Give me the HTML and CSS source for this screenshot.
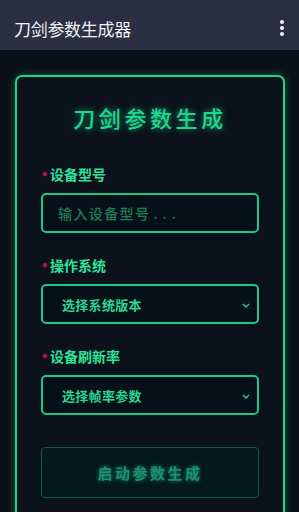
FILE: index.html
```html
<!DOCTYPE html>
<html lang="zh">
<head>
<meta charset="utf-8">
<link rel="stylesheet" href="styles.css">
</head>
<body>
<header class="appbar">
  <span class="appbar-title">刀剑参数生成器</span>
  <span class="menu"><i></i><i></i><i></i></span>
</header>
<main class="page">
  <section class="card">
    <h1 class="card-title">刀剑参数生成</h1>
    <div class="field">
      <label class="label"><span class="dot"></span>设备型号</label>
      <div class="control input"><span class="placeholder">输入设备型号<span class="dots">...</span></span></div>
    </div>
    <div class="field">
      <label class="label"><span class="dot"></span>操作系统</label>
      <div class="control select"><span>选择系统版本</span>
        <svg class="chev" width="8" height="5" viewBox="0 0 8 5"><path d="M1 1 L4 4 L7 1" fill="none" stroke="#2bd596" stroke-width="1.3"/></svg>
      </div>
    </div>
    <div class="field">
      <label class="label"><span class="dot"></span>设备刷新率</label>
      <div class="control select"><span>选择帧率参数</span>
        <svg class="chev" width="8" height="5" viewBox="0 0 8 5"><path d="M1 1 L4 4 L7 1" fill="none" stroke="#2bd596" stroke-width="1.3"/></svg>
      </div>
    </div>
    <div class="button"><span>启动参数生成</span></div>
  </section>
</main>
</body>
</html>
```
FILE: styles.css
```css
* { box-sizing: border-box; }
html, body { margin: 0; padding: 0; height: 100%; overflow: hidden; }
body {
  background: #0a0f18;
  font-family: "Noto Sans CJK SC", "Noto Sans", sans-serif;
  color: #fff;
}
.appbar {
  height: 50px;
  background: #2c2e43;
  display: flex;
  align-items: center;
  justify-content: space-between;
  padding: 6px 12px 0 14px;
}
.appbar-title {
  font-size: 17px;
  color: #f2f2f5;
  letter-spacing: -0.3px;
}
.menu {
  display: flex;
  flex-direction: column;
  gap: 2px;
  padding-right: 3px;
}
.menu i {
  width: 4px; height: 4px; border-radius: 50%;
  background: #f2f2f5;
  display: block;
}
.page {
  padding: 25px 14px 0 15px;
}
.card {
  border: 2px solid #18d68a;
  border-radius: 7px;
  box-shadow: 0 0 10px rgba(24, 214, 138, 0.35);
  background: #0b121b;
  padding: 26px 24px 40px;
  height: 520px;
}
.card-title {
  margin: 0 0 33px;
  text-align: center;
  font-size: 22px;
  font-weight: 500;
  letter-spacing: 3.6px;
  color: #1fd690;
  line-height: 28px;
  text-shadow: 0 0 6px rgba(31, 214, 144, 0.7);
}
.field { margin-bottom: 22px; }
.label {
  display: flex;
  align-items: center;
  font-size: 14px;
  font-weight: 700;
  color: #2ee29a;
  line-height: 20px;
  margin-bottom: 9px;
  padding-left: 2px;
}
.dot {
  width: 4px; height: 4px; border-radius: 50%;
  background: #b0184f;
  margin-right: 3px;
  box-shadow: 0 0 2px #b0184f;
}
.control {
  height: 40px;
  border: 2px solid #18c884;
  border-radius: 5px;
  background: #06111a;
  display: flex;
  align-items: center;
  justify-content: space-between;
  font-size: 13px;
}
.input { padding-left: 15px; }
.placeholder {
  color: #1f7c58;
  font-size: 14px;
  letter-spacing: 1.4px;
  font-weight: 500;
}
.placeholder .dots {
  letter-spacing: 5px;
  margin-left: 3px;
}
.select {
  padding: 0 7px 0 19px;
  color: #2bd596;
  font-weight: 700;
  letter-spacing: 0.3px;
}
.chev { margin-top: 2px; }
.button {
  margin-top: 32px;
  height: 51px;
  border: 1px solid #0f5a46;
  border-radius: 4px;
  background: #03191b;
  display: flex;
  align-items: center;
  justify-content: center;
}
.button span {
  font-size: 15px;
  font-weight: 700;
  letter-spacing: 2.5px;
  color: #1d8e6e;
  text-shadow: 0 0 4px rgba(30, 160, 120, 0.9);
  filter: blur(0.5px);
}
```
